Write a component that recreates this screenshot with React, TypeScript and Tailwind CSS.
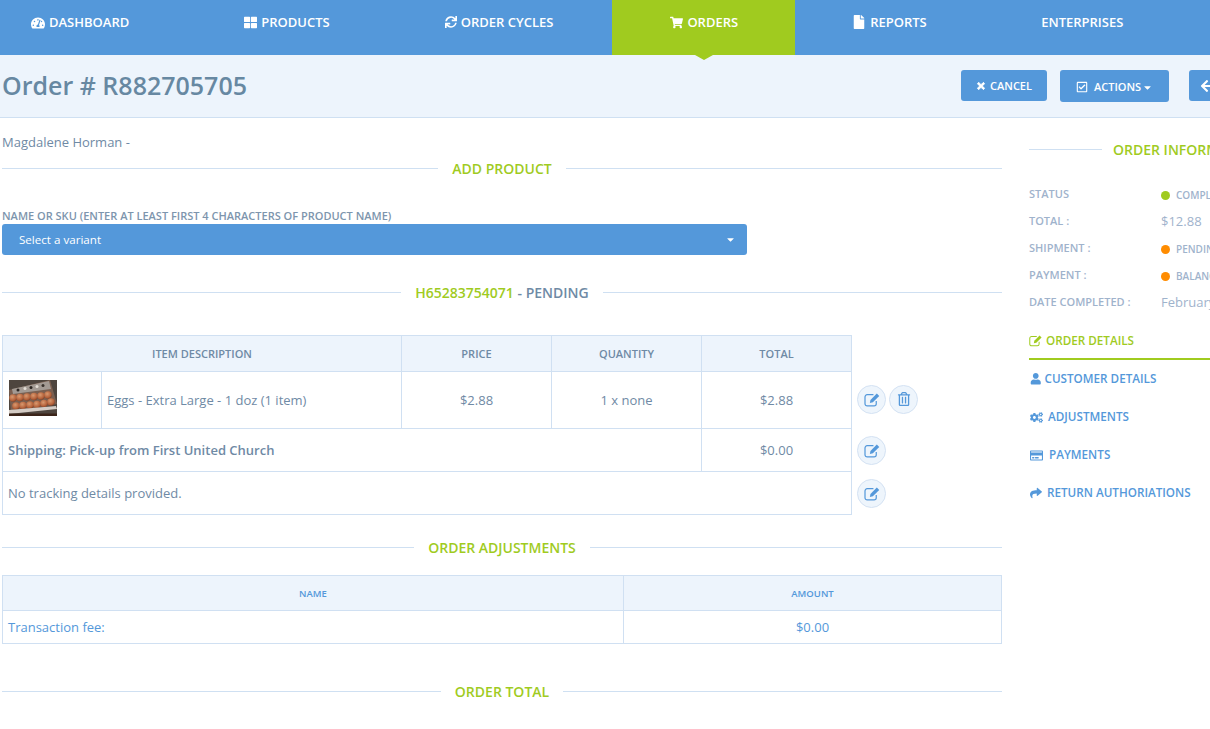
import React from "react";
import {
  FaTachometerAlt, FaThLarge, FaSync, FaShoppingCart, FaFile, FaTimes, FaRegCheckSquare,
  FaRegTrashAlt, FaUser, FaCogs, FaRegCreditCard, FaShare, FaArrowLeft, FaCaretDown,
} from "react-icons/fa";

const font = { fontFamily: '"Open Sans", sans-serif' };

function EditIcon({ className = "" }: { className?: string }) {
  return (
    <svg viewBox="0 0 18 16" className={className} fill="none">
      <path d="M13 9.5V12.5C13 13.9 12 14.8 10.7 14.8H3.3C2 14.8 1 13.9 1 12.5V5.2C1 3.9 2 2.9 3.3 2.9H10" stroke="currentColor" strokeWidth="1.3" />
      <path d="M6.8 8.4L13.6 1.6L16.2 4.2L9.4 11L6.2 11.6Z" fill="currentColor" />
    </svg>
  );
}

function NavItem({ icon, label, active, cls = "px-[57.5px]" }: { icon?: React.ReactNode; label: string; active?: boolean; cls?: string }) {
  return (
    <div className={"relative flex h-[55px] shrink-0 items-start gap-[4px] pt-[13px] text-[13px] font-semibold leading-[18px] text-white " + cls + " " + (active ? "bg-[#a0cb1f]" : "")}>
      {icon}
      <span>{label}</span>
      {active && <div className="absolute left-1/2 top-[55px] h-0 w-0 -translate-x-1/2 border-x-[9px] border-t-[5px] border-x-transparent border-t-[#a0cb1f]" />}
    </div>
  );
}

function Section({ children, className = "" }: { children: React.ReactNode; className?: string }) {
  return (
    <div className={"flex items-center gap-[14px] " + className}>
      <div className="mb-[2px] h-px flex-1 bg-[#cfe0f2]" />
      <div className="text-[14px] font-semibold leading-[20px] text-[#a0cb1f]">{children}</div>
      <div className="mb-[2px] h-px flex-1 bg-[#cfe0f2]" />
    </div>
  );
}

function RoundBtn({ trash }: { trash?: boolean }) {
  return (
    <div className="flex h-[29px] w-[29px] items-center justify-center rounded-full border border-[#d4e2f3] bg-[#eef5fc] text-[#5498da]">
      {trash ? <FaRegTrashAlt className="text-[14px]" /> : <EditIcon className="ml-[1px] h-[15px] w-[17px]" />}
    </div>
  );
}

function Info({ label, children }: { label: string; children: React.ReactNode }) {
  return (
    <div className="flex h-[27px] items-center">
      <div className="w-[132px] shrink-0 text-[11px] font-semibold text-[#9fb3cc]">{label}</div>
      <div className="whitespace-nowrap">{children}</div>
    </div>
  );
}

function Status({ color, label }: { color: string; label: string }) {
  return (
    <div className="flex items-center gap-[6px] pt-[1px] text-[10px] font-semibold text-[#9fb3cc]">
      <span className={"h-[9px] w-[9px] rounded-full " + color} />
      {label}
    </div>
  );
}

function SideLink({ icon, label, active, gap }: { icon: React.ReactNode; label: string; active?: boolean; gap: string }) {
  return (
    <div className={"flex h-[38px] items-center text-[11.7px] font-semibold whitespace-nowrap " + gap + " " + (active ? "border-b-2 border-[#a0cb1f] pt-[1px] text-[#a0cb1f]" : "text-[#5498da]")}>
      {icon}
      {label}
    </div>
  );
}

function Eggs() {
  const eggs = [
    [4, 18], [11, 17.5], [18, 17], [25, 16.5], [32, 16], [39, 15],
    [7, 26], [14, 25.5], [21, 25], [28, 24.5], [35, 23.5], [42, 22],
  ];
  return (
    <svg width="48" height="36" viewBox="0 0 48 36" className="block">
      <defs>
        <radialGradient id="egg" cx="40%" cy="35%" r="70%">
          <stop offset="0%" stopColor="#d99a70" />
          <stop offset="70%" stopColor="#b4613a" />
          <stop offset="100%" stopColor="#7f3f25" />
        </radialGradient>
      </defs>
      <rect width="48" height="36" fill="#4e453e" />
      <polygon points="0,10 41,0 48,24 2,33" fill="#7a5f50" />
      <polygon points="3,9 40,1 42,9 4,14" fill="#a39a93" />
      <circle cx="9" cy="10" r="1.5" fill="#2c2622" />
      <circle cx="16" cy="8.5" r="1.5" fill="#e3ddd5" />
      <circle cx="22" cy="7.5" r="1.5" fill="#2c2622" />
      <circle cx="28" cy="6.5" r="1.5" fill="#e3ddd5" />
      <circle cx="34" cy="5.5" r="1.5" fill="#3a322d" />
      {eggs.map(([x, y], i) => (
        <ellipse key={i} cx={x} cy={y} rx="3.8" ry="3.7" fill="url(#egg)" />
      ))}
      <polygon points="0,30 47,26 48,29 0,34" fill="#d4cbc4" />
      <rect x="0" y="33.5" width="48" height="2.5" fill="#3b2419" />
    </svg>
  );
}

export default function App() {
  const cell = "border-r border-b border-[#d0e0f2]";
  const th = "flex items-center justify-center border-r border-[#d0e0f2] pt-[2px] text-[11px] font-semibold text-[#6f8aa5]";
  return (
    <div style={font} className="h-[729px] w-[1210px] overflow-hidden bg-white text-[13px] text-[#6f8aa5]">
      <nav className="flex h-[55px] bg-[#5498da] -ml-[26.5px]">
        <NavItem icon={<FaTachometerAlt className="mt-[3px] text-[14px]" />} label="DASHBOARD" />
        <NavItem icon={<FaThLarge className="mt-[3px] text-[13px]" />} label="PRODUCTS" />
        <NavItem cls="pl-[57.5px] pr-[59px]" icon={<FaSync className="mt-[3px] text-[12px]" />} label="ORDER CYCLES" />
        <NavItem active cls="pl-[58px] pr-[57px]" icon={<FaShoppingCart className="mt-[3px] text-[13px]" />} label="ORDERS" />
        <NavItem cls="pl-[57px] pr-[57px]" icon={<FaFile className="mt-[2px] text-[14px]" />} label="REPORTS" />
        <NavItem label="ENTERPRISES" />
      </nav>

      <header className="flex h-[63px] items-start border-b border-[#cfe0f2] bg-[#edf4fc] pl-[2px] pt-[15px]">
        <h1 className="-mt-[2px] w-[959px] shrink-0 text-[25px] font-semibold leading-[35px] text-[#6788a2]">Order # R882705705</h1>
        <div className="flex h-[31px] w-[86px] shrink-0 items-center justify-center gap-[4px] rounded-[3px] bg-[#5498da] pt-[1px] text-[11px] font-semibold text-white">
          <FaTimes className="text-[10px]" stroke="currentColor" strokeWidth={50} />CANCEL
        </div>
        <div className="ml-[13px] flex h-[32px] w-[109px] shrink-0 items-center justify-center gap-[1px] rounded-[3px] bg-[#5498da] pt-[2px] text-[11px] font-semibold text-white">
          <FaRegCheckSquare className="mr-[5px] text-[12px]" />ACTIONS<FaCaretDown className="text-[11px]" />
        </div>
        <div className="ml-[20px] flex h-[31px] w-[60px] shrink-0 items-center rounded-[3px] bg-[#5498da] pl-[11px] text-white">
          <FaArrowLeft className="shrink-0 text-[14px]" />
        </div>
      </header>

      <div className="flex">
        <main className="ml-[2px] w-[1000px] shrink-0">
          <div className="mt-[15px] h-[18px] leading-[18px]">Magdalene Horman -</div>
          <Section className="mt-[8px]">ADD PRODUCT</Section>
          <div className="mt-[31px] text-[11px] font-semibold leading-[12px] text-[#7d95ad]">NAME OR SKU (ENTER AT LEAST FIRST 4 CHARACTERS OF PRODUCT NAME)</div>
          <div className="mt-[2px] flex h-[31px] w-[745px] items-center justify-between rounded-[3px] bg-[#5498da] pl-[17px] pr-[11px] text-[11.6px] text-white">
            Select a variant
            <FaCaretDown className="text-[11px]" />
          </div>
          <Section className="mt-[28px]">
            H65283754071 <span className="text-[#6f8aa5]">- PENDING</span>
          </Section>

          <div className="mt-[32px] flex">
            <div className="w-[850px] shrink-0 border-l border-t border-[#d0e0f2]">
              <div className="grid h-[36px] grid-cols-[399px_150px_150px_150px] border-b border-[#d0e0f2] bg-[#edf4fc]">
                <div className={th}>ITEM DESCRIPTION</div>
                <div className={th}>PRICE</div>
                <div className={th}>QUANTITY</div>
                <div className={th}>TOTAL</div>
              </div>
              <div className="grid h-[57px] grid-cols-[99px_300px_150px_150px_150px]">
                <div className={cell + " flex items-center pb-[4px] pl-[6px]"}><Eggs /></div>
                <div className={cell + " flex items-center pl-[5px] pt-[2px]"}>Eggs - Extra Large - 1 doz (1 item)</div>
                <div className={cell + " flex items-center justify-center pt-[2px]"}>$2.88</div>
                <div className={cell + " flex items-center justify-center pt-[2px]"}>1 x none</div>
                <div className={cell + " flex items-center justify-center pt-[2px]"}>$2.88</div>
              </div>
              <div className="grid h-[43px] grid-cols-[699px_150px]">
                <div className={cell + " flex items-center pl-[5px] pt-[2px] font-semibold"}>Shipping: Pick-up from First United Church</div>
                <div className={cell + " flex items-center justify-center pt-[2px]"}>$0.00</div>
              </div>
              <div className={cell + " flex h-[43px] items-center pl-[5px] pt-[2px]"}>No tracking details provided.</div>
            </div>
            <div className="ml-[5px] flex flex-col pt-[36px]">
              <div className="flex h-[57px] items-center gap-[3px] pb-[1px]"><RoundBtn /><RoundBtn trash /></div>
              <div className="flex h-[43px] items-center pt-[2px]"><RoundBtn /></div>
              <div className="flex h-[43px] items-center pt-[2px]"><RoundBtn /></div>
            </div>
          </div>

          <Section className="mt-[23px]">ORDER ADJUSTMENTS</Section>
          <div className="mt-[17px] border-l border-t border-[#d0e0f2]">
            <div className="grid h-[35px] grid-cols-[621px_378px] border-b border-[#d0e0f2] bg-[#edf4fc] text-[9.5px] font-semibold text-[#5498da]">
              <div className="flex items-center justify-center border-r border-[#d0e0f2] pt-[2px]">NAME</div>
              <div className="flex items-center justify-center border-r border-[#d0e0f2] pt-[2px]">AMOUNT</div>
            </div>
            <div className="grid h-[33px] grid-cols-[621px_378px] text-[#5498da]">
              <div className={cell + " flex items-center pl-[5px] pt-[2px]"}>Transaction fee:</div>
              <div className={cell + " flex items-center justify-center pt-[2px]"}>$0.00</div>
            </div>
          </div>
          <Section className="mt-[38px]">ORDER TOTAL</Section>
        </main>

        <aside className="ml-[27px] w-[300px] shrink-0">
          <div className="mt-[22px] flex items-center gap-[11px]">
            <div className="mb-[2px] h-px w-[73px] bg-[#cfe0f2]" />
            <div className="whitespace-nowrap text-[14px] font-semibold leading-[20px] text-[#a0cb1f]">ORDER INFORMATION</div>
          </div>
          <div className="mt-[21px]">
            <Info label="STATUS"><Status color="bg-[#a0cb1f]" label="COMPLETE" /></Info>
            <Info label="TOTAL :"><span className="text-[13px] text-[#9fb3cc]">$12.88</span></Info>
            <Info label="SHIPMENT :"><Status color="bg-[#ff8c00]" label="PENDING" /></Info>
            <Info label="PAYMENT :"><Status color="bg-[#ff8c00]" label="BALANCE DUE" /></Info>
            <Info label="DATE COMPLETED :"><span className="text-[13px] text-[#9fb3cc]">February 2</span></Info>
          </div>
          <div className="mt-[6px] w-[181px]">
            <SideLink active gap="gap-[3px]" icon={<EditIcon className="h-[13px] w-[14px]" />} label="ORDER DETAILS" />
            <SideLink gap="gap-[3px]" icon={<FaUser className="ml-[1px] text-[11.5px]" />} label="CUSTOMER DETAILS" />
            <SideLink gap="gap-[5px]" icon={<FaCogs className="ml-[1px] text-[13px]" />} label="ADJUSTMENTS" />
            <SideLink gap="gap-[6px]" icon={<FaRegCreditCard className="ml-[1px] text-[13px]" />} label="PAYMENTS" />
            <SideLink gap="gap-[5px]" icon={<FaShare className="ml-[1px] text-[12px]" />} label="RETURN AUTHORIATIONS" />
          </div>
        </aside>
      </div>
    </div>
  );
}
